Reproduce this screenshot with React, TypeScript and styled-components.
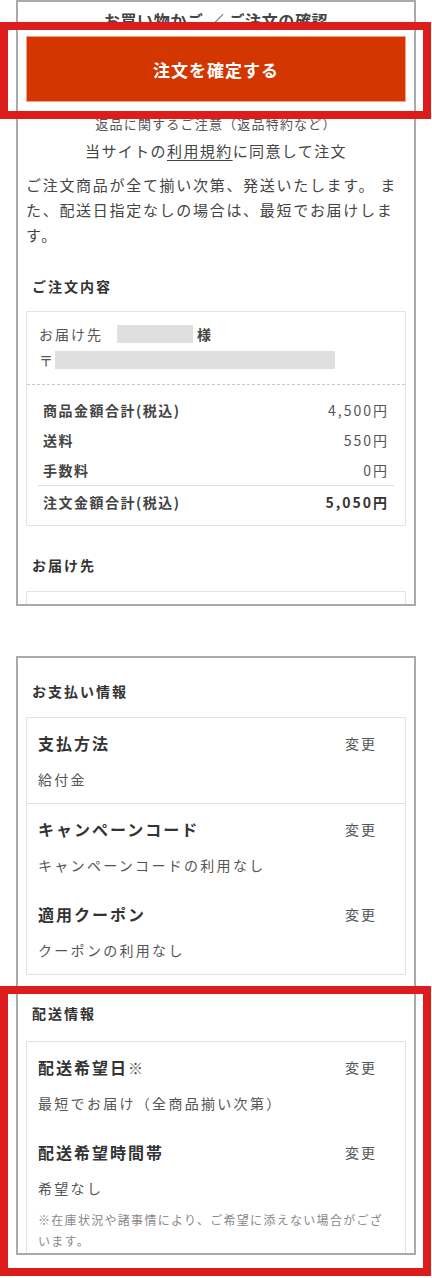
import React from "react";
import styled, { createGlobalStyle } from "styled-components";

const GlobalStyle = createGlobalStyle`
  html, body { margin: 0; padding: 0; background: #fff; }
  body {
    font-family: "Noto Sans CJK JP", "Noto Sans", sans-serif;
    color: #333;
  }
  * { box-sizing: border-box; }
`;

const Page = styled.div`
  position: relative;
  width: 432px;
  height: 1278px;
  overflow: hidden;
  background: #fff;
  display: flex;
  flex-direction: column;
  gap: 50px;
  padding-left: 16px;
`;

const Shot = styled.section<{ $h: number }>`
  width: 400px;
  height: ${(p) => p.$h}px;
  flex-shrink: 0;
  border: 2px solid #aaa;
  overflow: hidden;
  padding: 0 8px;
  background: #fff;
`;

const Header = styled.h1`
  margin: 0;
  padding-top: 6px;
  font-size: 16px;
  line-height: 24px;
  font-weight: 700;
  letter-spacing: 0.6px;
  text-align: center;
  color: #444;
  white-space: nowrap;
`;

const ConfirmButton = styled.button`
  display: flex;
  align-items: center;
  justify-content: center;
  width: 100%;
  height: 66px;
  margin-top: 4px;
  border: 1px solid #f2a27c;
  background: #d33600;
  color: #fff;
  font-family: inherit;
  font-size: 17px;
  font-weight: 700;
  letter-spacing: 1px;
`;

const SmallLink = styled.p`
  margin: 12px 0 0;
  font-size: 13px;
  line-height: 20px;
  letter-spacing: 1.2px;
  text-align: center;
  color: #555;
`;

const Agree = styled.p`
  margin: 5px 0 0;
  font-size: 15px;
  line-height: 24px;
  letter-spacing: 1.4px;
  text-align: center;
  color: #444;
`;

const Terms = styled.span`
  text-decoration: underline;
  text-underline-offset: 3px;
  text-decoration-thickness: 1px;
`;

const Notice = styled.p`
  margin: 9px 0 0;
  font-size: 15px;
  line-height: 25px;
  letter-spacing: 1.7px;
  color: #444;
`;

const SectionTitle = styled.h2<{ $top: number }>`
  margin: ${(p) => p.$top}px 0 0;
  padding-left: 6px;
  font-size: 14px;
  line-height: 20px;
  font-weight: 700;
  letter-spacing: 2px;
  color: #333;
`;

const Card = styled.div<{ $top: number; $min?: number }>`
  margin-top: ${(p) => p.$top}px;
  border: 1px solid #e3e3e3;
  min-height: ${(p) => p.$min ?? 0}px;
  background: #fff;
`;

const AddressBlock = styled.div`
  display: flex;
  flex-direction: column;
  gap: 6px;
  padding: 12px 12px 14px;
  border-bottom: 1px dashed #c8c8c8;
`;

const AddressLine = styled.div`
  display: flex;
  align-items: center;
  height: 20px;
  font-size: 14px;
  letter-spacing: 2px;
  color: #555;
`;

const Masked = styled.span<{ $w: number; $gap: number }>`
  display: inline-block;
  width: ${(p) => p.$w}px;
  height: 18px;
  margin-left: ${(p) => p.$gap}px;
  background: #dfdfdf;
`;

const Honorific = styled.span`
  margin-left: 4px;
  font-weight: 700;
  color: #444;
`;

const Totals = styled.div`
  padding: 10px 11px 8px;
`;

const TotalRow = styled.div<{ $final?: boolean }>`
  display: flex;
  align-items: center;
  justify-content: space-between;
  height: ${(p) => (p.$final ? 32 : 30)}px;
  padding: 0 5px 0 5px;
  border-top: ${(p) => (p.$final ? "1px solid #dedede" : "none")};
  font-size: 14px;
  letter-spacing: 1.5px;
`;

const RowLabel = styled.span`
  font-weight: 700;
  color: #444;
`;

const RowValue = styled.span<{ $strong?: boolean }>`
  font-weight: ${(p) => (p.$strong ? 700 : 400)};
  letter-spacing: 2px;
  color: ${(p) => (p.$strong ? "#333" : "#555")};
`;

const Group = styled.div<{ $divided?: boolean }>`
  border-bottom: ${(p) => (p.$divided ? "1px solid #dedede" : "none")};
`;

const Item = styled.div`
  padding: 13px 11px 14px;
`;

const ItemHead = styled.div`
  display: flex;
  align-items: center;
  justify-content: space-between;
  height: 24px;
`;

const ItemTitle = styled.h3`
  margin: 0;
  font-size: 16px;
  line-height: 24px;
  font-weight: 700;
  letter-spacing: 2px;
  color: #333;
`;

const Mark = styled.span`
  font-weight: 400;
  font-size: 15px;
  color: #555;
`;

const ChangeLink = styled.a`
  margin-right: 17px;
  font-size: 14px;
  letter-spacing: 2px;
  color: #555;
  text-decoration: none;
`;

const ItemValue = styled.p`
  margin: 14px 0 0;
  font-size: 14px;
  line-height: 20px;
  letter-spacing: 2.3px;
  color: #555;
`;

const Note = styled.p`
  margin: 11px 0 0;
  font-size: 12px;
  line-height: 21px;
  letter-spacing: 1.3px;
  color: #888;
`;

const Highlight = styled.div<{ $top: number; $h: number }>`
  position: absolute;
  left: 0;
  top: ${(p) => p.$top}px;
  width: 431px;
  height: ${(p) => p.$h}px;
  border: 8px solid #dd1c1c;
  pointer-events: none;
`;

type Entry = { title: React.ReactNode; value: string; note?: string };

const Entries: React.FC<{ items: Entry[] }> = ({ items }) => (
  <>
    {items.map((it, i) => (
      <Item key={i}>
        <ItemHead>
          <ItemTitle>{it.title}</ItemTitle>
          <ChangeLink>変更</ChangeLink>
        </ItemHead>
        <ItemValue>{it.value}</ItemValue>
        {it.note && <Note>{it.note}</Note>}
      </Item>
    ))}
  </>
);

const totals = [
  { label: "商品金額合計(税込)", value: "4,500円" },
  { label: "送料", value: "550円" },
  { label: "手数料", value: "0円" },
];

export default function App() {
  return (
    <>
      <GlobalStyle />
      <Page>
        <Shot $h={606}>
          <Header>お買い物かご ／ ご注文の確認</Header>
          <ConfirmButton>注文を確定する</ConfirmButton>
          <SmallLink>返品に関するご注意（返品特約など）</SmallLink>
          <Agree>
            当サイトの<Terms>利用規約</Terms>に同意して注文
          </Agree>
          <Notice>
            ご注文商品が全て揃い次第、発送いたします。 また、配送日指定なしの場合は、最短でお届けします。
          </Notice>
          <SectionTitle $top={29}>ご注文内容</SectionTitle>
          <Card $top={15}>
            <AddressBlock>
              <AddressLine>
                お届け先
                <Masked $w={76} $gap={14} />
                <Honorific>様</Honorific>
              </AddressLine>
              <AddressLine>
                〒
                <Masked $w={280} $gap={0} />
              </AddressLine>
            </AddressBlock>
            <Totals>
              {totals.map((t) => (
                <TotalRow key={t.label}>
                  <RowLabel>{t.label}</RowLabel>
                  <RowValue>{t.value}</RowValue>
                </TotalRow>
              ))}
              <TotalRow $final>
                <RowLabel>注文金額合計(税込)</RowLabel>
                <RowValue $strong>5,050円</RowValue>
              </TotalRow>
            </Totals>
          </Card>
          <SectionTitle $top={29}>お届け先</SectionTitle>
          <Card $top={16} $min={60} />
        </Shot>

        <Shot $h={599}>
          <SectionTitle $top={23}>お支払い情報</SectionTitle>
          <Card $top={16}>
            <Group $divided>
              <Entries items={[{ title: "支払方法", value: "給付金" }]} />
            </Group>
            <Group>
              <Entries
                items={[
                  { title: "キャンペーンコード", value: "キャンペーンコードの利用なし" },
                  { title: "適用クーポン", value: "クーポンの利用なし" },
                ]}
              />
            </Group>
          </Card>
          <SectionTitle $top={28}>配送情報</SectionTitle>
          <Card $top={18} $min={260}>
            <Entries
              items={[
                {
                  title: (
                    <>
                      配送希望日<Mark>※</Mark>
                    </>
                  ),
                  value: "最短でお届け（全商品揃い次第）",
                },
                {
                  title: "配送希望時間帯",
                  value: "希望なし",
                  note: "※在庫状況や諸事情により、ご希望に添えない場合がございます。",
                },
              ]}
            />
          </Card>
        </Shot>

        <Highlight $top={22} $h={97} />
        <Highlight $top={986} $h={290} />
      </Page>
    </>
  );
}
